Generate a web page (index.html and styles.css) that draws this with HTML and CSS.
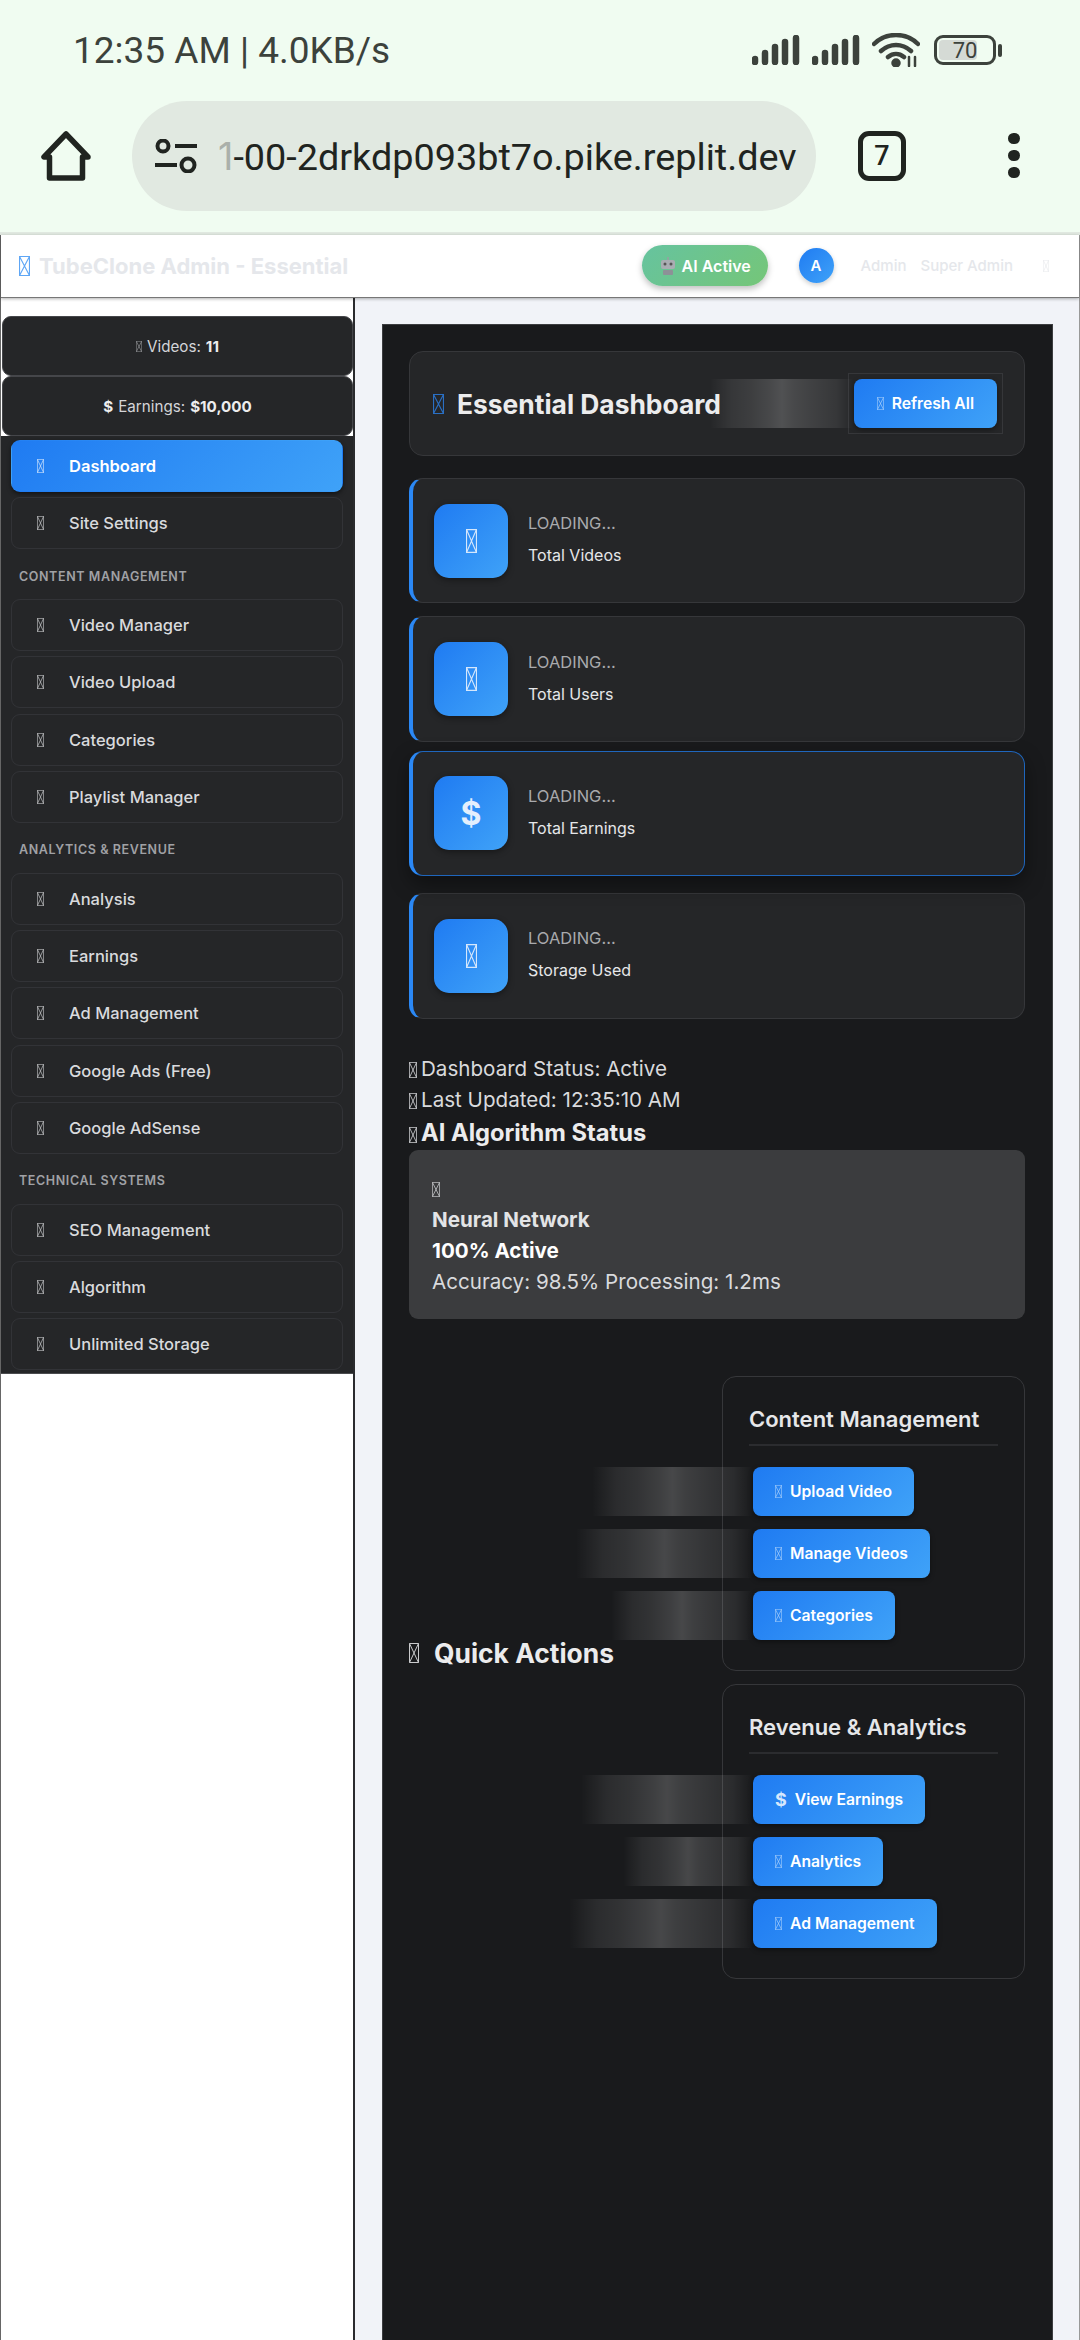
FILE: index.html
```html
<!DOCTYPE html>
<html lang="en">
<head>
  <meta charset="UTF-8" />
  <meta name="viewport" content="width=device-width, initial-scale=1.0"/>
  <title>TubeClone Admin - Essential</title>
  <link rel="stylesheet" href="styles.css">
</head>
<body>
  <svg class="defs" width="0" height="0">
    <symbol id="tofu" viewBox="0 0 10 20" preserveAspectRatio="none">
      <path d="M.5.5h9v19h-9zM.5.5l9 19M9.5.5l-9 19" fill="none" stroke="currentColor" stroke-width="1"/>
    </symbol>
  </svg>

  <!-- PHONE STATUS BAR -->
  <div class="status-bar">
    <span class="status-time">12:35 AM | 4.0KB/s</span>
    <div class="status-icons">
      <svg class="signal" viewBox="0 0 48 30"><path d="M3 27v-3M13 27V18M23 27V12M33 27V7M44 27V3" stroke="#3c423c" stroke-width="6.500" stroke-linecap="round"/></svg>
      <svg class="signal" viewBox="0 0 48 30"><path d="M3 27v-3M13 27V18M23 27V12M33 27V7M44 27V3" stroke="#3c423c" stroke-width="6.500" stroke-linecap="round"/></svg>
      <svg class="wifi" viewBox="0 0 48 34" fill="none" stroke="#3c423c" stroke-width="4.500" stroke-linecap="round">
        <path d="M2 11C14-1 34-1 46 11M9 18c9-8 21-8 30 0M16 24c5-4 11-4 16 0"/>
        <circle cx="24" cy="30" r="2.500" fill="#3c423c"/>
        <path d="M37 24v9M43 24v9" stroke-width="2.500"/>
      </svg>
      <div class="battery">
        <div class="battery-body"><span class="battery-fill"></span><span class="battery-text">70</span></div>
        <span class="battery-nub"></span>
      </div>
    </div>
  </div>

  <!-- BROWSER TOOLBAR -->
  <div class="toolbar">
    <svg class="home-icon" viewBox="0 0 50 50" fill="none" stroke="#202420" stroke-width="5.500" stroke-linejoin="round"><path d="M25 3 3 26h5.500v21h33V26H47z"/></svg>
    <div class="url-pill">
      <svg class="tune-icon" viewBox="0 0 42 34" fill="none" stroke="#202420" stroke-width="4"><circle cx="8" cy="7" r="5.500"/><path d="M20 7h22M0 26h22"/><circle cx="33" cy="26" r="6.500"/></svg>
      <span class="url-text"><span class="url-fade">1</span>-00-2drkdp093bt7o.pike.replit.dev</span>
    </div>
    <div class="tab-count">7</div>
    <div class="menu-dots"><span></span><span></span><span></span></div>
  </div>

  <div class="app">
    <!-- TOP HEADER -->
    <header class="topbar">
      <div class="brand"><svg class="tofu brand-tofu"><use href="#tofu"/></svg><span>TubeClone Admin - Essential</span></div>
      <div class="topbar-right">
        <div class="ai-pill">
          <svg class="robot" viewBox="0 0 18 18"><path d="M9 0v3" stroke="#9a9ea3" stroke-width="1.500"/><rect x="2" y="3" width="14" height="9" rx="2" fill="#a9adb2"/><circle cx="6" cy="7" r="1.500" fill="#555"/><circle cx="12" cy="7" r="1.500" fill="#555"/><rect x="4" y="13" width="10" height="5" rx="1" fill="#8d9197"/></svg>
          <span>AI Active</span>
        </div>
        <div class="avatar">A</div>
        <span class="user-name">Admin</span>
        <span class="user-role">Super Admin</span>
        <svg class="tofu user-tofu"><use href="#tofu"/></svg>
      </div>
    </header>

    <div class="layout">
      <!-- SIDEBAR -->
      <aside class="sidebar">
        <div class="mini-stat"><svg class="tofu mini-tofu"><use href="#tofu"/></svg> Videos: <strong>11</strong></div>
        <div class="mini-stat"><strong>$</strong> Earnings: <strong>$10,000</strong></div>
        <nav class="side-nav">
          <a class="nav-item active"><svg class="tofu"><use href="#tofu"/></svg><span>Dashboard</span></a>
          <a class="nav-item"><svg class="tofu"><use href="#tofu"/></svg><span>Site Settings</span></a>
          <div class="nav-section">CONTENT MANAGEMENT</div>
          <a class="nav-item"><svg class="tofu"><use href="#tofu"/></svg><span>Video Manager</span></a>
          <a class="nav-item"><svg class="tofu"><use href="#tofu"/></svg><span>Video Upload</span></a>
          <a class="nav-item"><svg class="tofu"><use href="#tofu"/></svg><span>Categories</span></a>
          <a class="nav-item"><svg class="tofu"><use href="#tofu"/></svg><span>Playlist Manager</span></a>
          <div class="nav-section">ANALYTICS &amp; REVENUE</div>
          <a class="nav-item"><svg class="tofu"><use href="#tofu"/></svg><span>Analysis</span></a>
          <a class="nav-item"><svg class="tofu"><use href="#tofu"/></svg><span>Earnings</span></a>
          <a class="nav-item"><svg class="tofu"><use href="#tofu"/></svg><span>Ad Management</span></a>
          <a class="nav-item"><svg class="tofu"><use href="#tofu"/></svg><span>Google Ads (Free)</span></a>
          <a class="nav-item"><svg class="tofu"><use href="#tofu"/></svg><span>Google AdSense</span></a>
          <div class="nav-section">TECHNICAL SYSTEMS</div>
          <a class="nav-item"><svg class="tofu"><use href="#tofu"/></svg><span>SEO Management</span></a>
          <a class="nav-item"><svg class="tofu"><use href="#tofu"/></svg><span>Algorithm</span></a>
          <a class="nav-item"><svg class="tofu"><use href="#tofu"/></svg><span>Unlimited Storage</span></a>
        </nav>
      </aside>

      <!-- MAIN -->
      <main class="main">
        <div class="panel">
          <div class="panel-header">
            <h1><svg class="tofu title-tofu"><use href="#tofu"/></svg>Essential Dashboard</h1>
            <div class="refresh-box">
              <button class="btn"><svg class="tofu btn-tofu"><use href="#tofu"/></svg>Refresh All</button>
            </div>
          </div>

          <div class="stat-card">
            <div class="stat-icon"><svg class="tofu stat-tofu"><use href="#tofu"/></svg></div>
            <div class="stat-text"><div class="stat-value">LOADING...</div><div class="stat-label">Total Videos</div></div>
          </div>
          <div class="stat-card">
            <div class="stat-icon"><svg class="tofu stat-tofu"><use href="#tofu"/></svg></div>
            <div class="stat-text"><div class="stat-value">LOADING...</div><div class="stat-label">Total Users</div></div>
          </div>
          <div class="stat-card hovered">
            <div class="stat-icon"><span class="stat-dollar">$</span></div>
            <div class="stat-text"><div class="stat-value">LOADING...</div><div class="stat-label">Total Earnings</div></div>
          </div>
          <div class="stat-card">
            <div class="stat-icon"><svg class="tofu stat-tofu"><use href="#tofu"/></svg></div>
            <div class="stat-text"><div class="stat-value">LOADING...</div><div class="stat-label">Storage Used</div></div>
          </div>

          <div class="status-lines">
            <p><svg class="tofu line-tofu"><use href="#tofu"/></svg>Dashboard Status: Active</p>
            <p><svg class="tofu line-tofu"><use href="#tofu"/></svg>Last Updated: 12:35:10 AM</p>
            <h3><svg class="tofu line-tofu"><use href="#tofu"/></svg>AI Algorithm Status</h3>
          </div>
          <div class="neural-card">
            <div><svg class="tofu neural-tofu"><use href="#tofu"/></svg></div>
            <div class="neural-name">Neural Network</div>
            <div class="neural-active">100% Active</div>
            <div>Accuracy: 98.5% Processing: 1.2ms</div>
          </div>

          <div class="quick-row">
            <h2><svg class="tofu quick-tofu"><use href="#tofu"/></svg>Quick Actions</h2>
            <div class="action-groups">
              <div class="action-group">
                <h4>Content Management</h4>
                <button class="btn"><svg class="tofu btn-tofu"><use href="#tofu"/></svg>Upload Video</button>
                <button class="btn"><svg class="tofu btn-tofu"><use href="#tofu"/></svg>Manage Videos</button>
                <button class="btn"><svg class="tofu btn-tofu"><use href="#tofu"/></svg>Categories</button>
              </div>
              <div class="action-group">
                <h4>Revenue &amp; Analytics</h4>
                <button class="btn"><span class="btn-dollar">$</span>View Earnings</button>
                <button class="btn"><svg class="tofu btn-tofu"><use href="#tofu"/></svg>Analytics</button>
                <button class="btn"><svg class="tofu btn-tofu"><use href="#tofu"/></svg>Ad Management</button>
              </div>
            </div>
          </div>
        </div>
      </main>
    </div>
  </div>
</body>
</html>
```
FILE: styles.css
```css
* {
  margin: 0;
  padding: 0;
  box-sizing: border-box;
  font-family: 'Inter', sans-serif;
}

body {
  width: 1080px;
  height: 2340px;
  overflow: hidden;
  background-color: #f0fcf1;
}

.defs {
  position: absolute;
}

/* Missing glyph boxes */
.tofu {
  display: inline-block;
  width: 7px;
  height: 14px;
  flex-shrink: 0;
  color: #c9cacc;
  vertical-align: -2px;
}

/* Status bar */
.status-bar {
  height: 100px;
  padding: 0 78px 0 73px;
  display: flex;
  justify-content: space-between;
  align-items: center;
}

.status-time {
  font-family: 'Roboto', sans-serif;
  font-size: 37px;
  color: #3c423c;
}

.status-icons {
  display: flex;
  align-items: center;
  gap: 12px;
}

.signal {
  width: 48px;
  height: 30px;
}

.wifi {
  width: 48px;
  height: 34px;
}

.battery {
  display: flex;
  align-items: center;
  gap: 2px;
  margin-left: 2px;
}

.battery-body {
  position: relative;
  width: 62px;
  height: 30px;
  border: 3px solid #3c423c;
  border-radius: 9px;
  display: flex;
  align-items: center;
  justify-content: center;
}

.battery-fill {
  position: absolute;
  left: 2px;
  top: 2px;
  bottom: 2px;
  width: 38px;
  background-color: #d5dad5;
  border-radius: 4px;
}

.battery-text {
  position: relative;
  font-family: 'Roboto', sans-serif;
  font-size: 22px;
  color: #3c423c;
}

.battery-nub {
  width: 4px;
  height: 13px;
  background-color: #3c423c;
  border-radius: 2px;
}

/* Browser toolbar */
.toolbar {
  height: 135px;
  border-bottom: 3px solid #e0e8e0;
  padding-bottom: 21px;
  display: flex;
  align-items: center;
  position: relative;
}

.home-icon {
  width: 50px;
  height: 50px;
  margin-left: 41px;
}

.url-pill {
  width: 684px;
  height: 110px;
  margin-left: 41px;
  background-color: #e1e9e1;
  border-radius: 55px;
  display: flex;
  align-items: center;
  padding-left: 23px;
}

.tune-icon {
  width: 42px;
  height: 34px;
}

.url-text {
  margin-left: 21px;
  font-family: 'Roboto', sans-serif;
  font-size: 37.800px;
  color: #202420;
  white-space: nowrap;
}

.url-fade {
  color: #aab0aa;
}

.tab-count {
  width: 48px;
  height: 50px;
  margin-left: 42px;
  border: 5px solid #202420;
  border-radius: 11px;
  display: flex;
  align-items: center;
  justify-content: center;
  font-family: 'Roboto', sans-serif;
  font-weight: 500;
  font-size: 27px;
  color: #202420;
}

.menu-dots {
  margin-left: 102px;
  display: flex;
  flex-direction: column;
  gap: 5.5px;
}

.menu-dots span {
  width: 11.500px;
  height: 11.500px;
  border-radius: 50%;
  background-color: #202420;
}

/* App */
.app {
  height: 2105px;
  background-color: #f1f3f8;
  border-left: 1px solid #666;
  border-right: 1px solid #999;
}

.topbar {
  height: 63px;
  background-color: #fff;
  border-bottom: 1px solid #777;
  box-shadow: 0 1px 3px rgba(0,0,0,0.3);
  padding: 0 30px 1px 18px;
  display: flex;
  justify-content: space-between;
  align-items: center;
  position: relative;
}

.brand {
  display: flex;
  align-items: center;
  font-weight: 700;
  font-size: 22px;
  color: #e5e7eb;
}

.brand-tofu {
  width: 11px;
  height: 20px;
  color: #5ea6f5;
  margin-right: 9px;
}

.topbar-right {
  display: flex;
  align-items: center;
}

.ai-pill {
  width: 126px;
  height: 41px;
  border-radius: 21px;
  background: linear-gradient(135deg, #66c39f, #75c678);
  box-shadow: 0 3px 6px rgba(0,0,0,0.25);
  display: flex;
  align-items: center;
  padding-left: 17px;
  gap: 5px;
  font-weight: 600;
  font-size: 16px;
  color: #fff;
}

.robot {
  width: 18px;
  height: 18px;
}

.avatar {
  width: 35px;
  height: 35px;
  margin-left: 31px;
  border-radius: 50%;
  background: linear-gradient(135deg, #1f7bf2, #3fa2f8);
  box-shadow: 0 2px 5px rgba(0,0,0,0.2);
  display: flex;
  align-items: center;
  justify-content: center;
  color: #fff;
  font-weight: 600;
  font-size: 15px;
}

.user-name, .user-role {
  font-weight: 500;
  font-size: 15px;
  color: #e5e7eb;
}

.user-name {
  margin-left: 27px;
}

.user-role {
  margin-left: 14px;
}

.user-tofu {
  width: 6px;
  height: 12px;
  margin-left: 30px;
  color: #e5e7eb;
}

.layout {
  display: flex;
  height: 2042px;
}

/* Sidebar */
.sidebar {
  width: 354px;
  background-color: #fff;
  border-right: 2px solid #2a2b2e;
  padding-top: 18px;
}

.mini-stat {
  height: 60px;
  margin-left: 1px;
  background-color: #252628;
  border: 1px solid #45464a;
  border-radius: 9px;
  display: flex;
  align-items: center;
  justify-content: center;
  gap: 5px;
  font-size: 15.200px;
  color: #d4d5d8;
}

.mini-stat strong {
  color: #ededee;
}

.mini-tofu {
  width: 6px;
  height: 11px;
  color: #a5a6a9;
}

.side-nav {
  background-color: #252628;
  padding: 4px 10px 3px 10px;
  display: flex;
  flex-direction: column;
  gap: 5.3px;
  border-bottom: 1px solid #4a4b4e;
}

.nav-item {
  height: 52px;
  border: 1px solid #323337;
  border-radius: 9px;
  display: flex;
  align-items: center;
  padding-left: 25px;
  gap: 25px;
  font-weight: 500;
  font-size: 16.500px;
  color: #d9dadd;
}

.nav-item.active {
  background: linear-gradient(135deg, #1f7bf2, #3fa2f8);
  border-color: transparent;
  box-shadow: 0 2px 4px rgba(0,0,0,0.5);
  color: #fff;
  font-weight: 600;
}

.nav-item.active .tofu {
  color: #d5e7fc;
}

.nav-section {
  height: 39.200px;
  padding: 14px 0 0 8px;
  font-weight: 600;
  font-size: 12.500px;
  letter-spacing: 0.6px;
  color: #a0a1a5;
}

/* Main */
.main {
  flex: 1;
  padding: 26px 26px 0 27px;
}

.panel {
  height: 2020px;
  background-color: #191a1c;
  border: 1px solid #3c3d40;
  border-bottom: none;
  padding: 26px 27px 0 26px;
}

.panel-header {
  height: 105px;
  margin-bottom: 22px;
  background-color: #252628;
  border: 1px solid #36373a;
  border-radius: 14px;
  padding: 0 21px 0 23px;
  display: flex;
  justify-content: space-between;
  align-items: center;
}

.panel-header h1 {
  display: flex;
  align-items: center;
  font-weight: 700;
  font-size: 26.400px;
  color: #ececed;
}

.title-tofu {
  width: 11px;
  height: 20px;
  color: #2a6fc4;
  margin-right: 13px;
}

.refresh-box {
  border: 1px solid #36373a;
  padding: 5px;
  display: flex;
}

.refresh-box .btn {
  padding: 0 23px;
}

.btn {
  position: relative;
  height: 49px;
  padding: 0 22px;
  background: linear-gradient(135deg, #1f7bf2, #3fa2f8);
  border: none;
  border-radius: 8px;
  box-shadow: 0 2px 5px rgba(0,0,0,0.4);
  display: flex;
  align-items: center;
  font-weight: 600;
  font-size: 15.700px;
  color: #fff;
  white-space: nowrap;
}

/* The shine strip parked to the left of each button */
.btn::before {
  content: "";
  position: absolute;
  top: 0;
  left: -100%;
  width: 100%;
  height: 100%;
  background: linear-gradient(90deg, transparent, rgba(255,255,255,0.08) 15%, rgba(255,255,255,0.11) 28%, rgba(255,255,255,0.16) 42%, rgba(255,255,255,0.2) 50%, rgba(255,255,255,0.16) 58%, rgba(255,255,255,0.12) 72%, rgba(255,255,255,0.08) 88%, transparent);
}

.btn-tofu {
  width: 7px;
  height: 13px;
  margin-right: 8px;
  color: #a9d0fb;
}

.btn-dollar {
  font-weight: 700;
  font-size: 18px;
  margin-right: 8px;
  color: #d5e7fc;
}

.stat-card {
  height: 125.400px;
  margin-bottom: 13px;
  background-color: #252628;
  border: 1px solid #36373a;
  border-left: 4px solid #2b88f5;
  border-radius: 14px;
  padding-left: 21px;
  display: flex;
  align-items: center;
  gap: 20px;
}

.stat-card.hovered {
  transform: translateY(-4px);
  border-color: #1f66bd;
  border-left-color: #2b88f5;
  box-shadow: 0 8px 20px rgba(0,0,0,0.4);
}

.stat-icon {
  width: 74px;
  height: 74px;
  border-radius: 15px;
  background: linear-gradient(135deg, #1f7bf2, #3fa2f8);
  box-shadow: 0 2px 6px rgba(0,0,0,0.4);
  display: flex;
  align-items: center;
  justify-content: center;
}

.stat-tofu {
  width: 11px;
  height: 24px;
  color: #d5e7fc;
}

.stat-dollar {
  font-weight: 700;
  font-size: 32px;
  color: #e3effd;
}

.stat-text {
  padding-bottom: 3px;
}

.stat-value {
  font-size: 16.500px;
  line-height: 32px;
  color: #a9aaad;
}

.stat-label {
  font-size: 16px;
  line-height: 32px;
  color: #e6e7e9;
}

.status-lines {
  margin-top: 34px;
}

.status-lines p {
  font-size: 20.600px;
  line-height: 31px;
  color: #d9dadd;
}

.status-lines h3 {
  font-weight: 700;
  font-size: 23.700px;
  line-height: 35px;
  color: #ececed;
}

.line-tofu {
  width: 8px;
  height: 16px;
  margin-right: 4px;
  color: #d9dadd;
}

.neural-card {
  height: 169px;
  padding: 23px 23px 0;
  background-color: #3b3c3e;
  border-radius: 9px;
  font-size: 20.600px;
  line-height: 31px;
  color: #d9dadd;
}

.neural-tofu {
  width: 8px;
  height: 15px;
  vertical-align: -1px;
}

.neural-name {
  font-weight: 700;
  color: #e3e4e6;
}

.neural-active {
  font-weight: 700;
  color: #fff;
}

.quick-row {
  margin-top: 57px;
  display: flex;
  justify-content: space-between;
  align-items: center;
}

.quick-row h2 {
  margin-bottom: 48px;
  display: flex;
  align-items: center;
  font-weight: 700;
  font-size: 26.400px;
  color: #ececed;
}

.quick-tofu {
  width: 10px;
  height: 20px;
  margin-right: 15px;
}

.action-groups {
  width: 303px;
  display: flex;
  flex-direction: column;
  gap: 13.500px;
}

.action-group {
  height: 295px;
  border: 1px solid #36373a;
  border-radius: 14px;
  padding: 26px 26px 0;
}

.action-group h4 {
  height: 43px;
  margin-bottom: 21px;
  border-bottom: 2px solid #2b2c2f;
  font-weight: 600;
  font-size: 22px;
  line-height: 32px;
  color: #e6e7e9;
}

.action-group .btn {
  margin: 0 0 13px 4px;
}
```
